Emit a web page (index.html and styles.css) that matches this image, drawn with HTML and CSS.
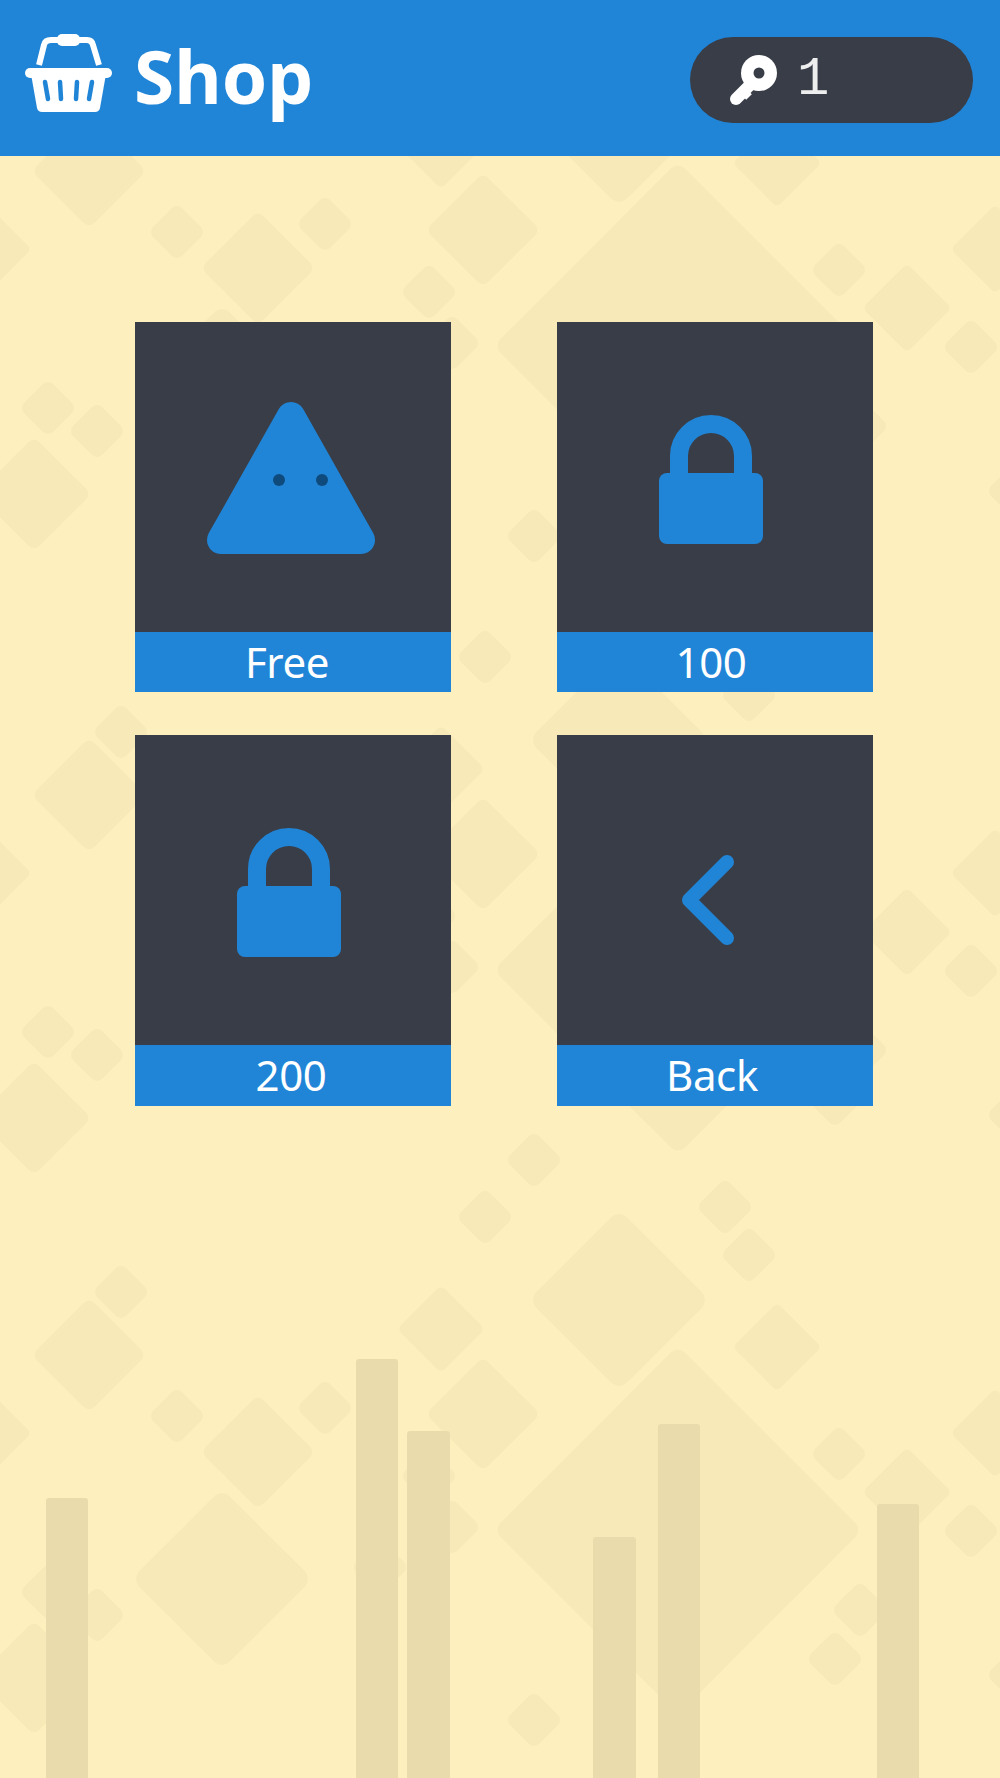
FILE: index.html
```html
<!DOCTYPE html>
<html lang="en">
<head>
    <meta charset="UTF-8">
    <meta name="viewport" content="width=device-width, initial-scale=1.0">
    <title>Shop</title>
    <link rel="stylesheet" href="styles.css">
</head>
<body>
    <div class="page">

        <!-- Fondo: rombos y barras -->
        <svg class="backdrop" width="1000" height="1778" viewBox="0 0 1000 1778" aria-hidden="true">
            <defs>
                <rect id="db" x="-50" y="-50" width="100" height="100" rx="4" transform="rotate(45)"/>
                <rect id="d" x="-50" y="-50" width="100" height="100" rx="9" transform="rotate(45)"/>
                <rect id="ds" x="-50" y="-50" width="100" height="100" rx="18" transform="rotate(45)"/>
                <g id="tile" class="diamonds">
                    <use href="#db" transform="translate(678 346) scale(2.61)"/>
                    <use href="#d" transform="translate(619 116) scale(1.28)"/>
                    <use href="#d" transform="translate(222 395) scale(1.28)"/>
                    <use href="#d" transform="translate(89 171) scale(.81)"/>
                    <use href="#d" transform="translate(258 268) scale(.81)"/>
                    <use href="#d" transform="translate(483 230) scale(.81)"/>
                    <use href="#d" transform="translate(34 494) scale(.81)"/>
                    <use href="#d" transform="translate(441 145) scale(.62)"/>
                    <use href="#d" transform="translate(777 163) scale(.63)"/>
                    <use href="#d" transform="translate(907 308) scale(.63)"/>
                    <use href="#d" transform="translate(995 249) scale(.63)"/>
                    <use href="#d" transform="translate(-13 249) scale(.63)"/>
                    <use href="#ds" transform="translate(121 108) scale(.41)"/>
                    <use href="#ds" transform="translate(177 232) scale(.41)"/>
                    <use href="#ds" transform="translate(325 224) scale(.41)"/>
                    <use href="#ds" transform="translate(534 536) scale(.41)"/>
                    <use href="#ds" transform="translate(485 33) scale(.41)"/>
                    <use href="#ds" transform="translate(725 23) scale(.41)"/>
                    <use href="#ds" transform="translate(749 71) scale(.41)"/>
                    <use href="#ds" transform="translate(839 270) scale(.41)"/>
                    <use href="#ds" transform="translate(971 347) scale(.41)"/>
                    <use href="#ds" transform="translate(860 426) scale(.41)"/>
                    <use href="#ds" transform="translate(835 475) scale(.41)"/>
                    <use href="#ds" transform="translate(452 343) scale(.41)"/>
                    <use href="#ds" transform="translate(429 292) scale(.41)"/>
                    <use href="#ds" transform="translate(380 383) scale(.41)"/>
                    <use href="#ds" transform="translate(97 431) scale(.41)"/>
                    <use href="#ds" transform="translate(48 408) scale(.41)"/>
                    <use href="#ds" transform="translate(1015 491) scale(.41)"/>
                </g>
            </defs>
            <use href="#tile"/>
            <use href="#tile" y="624"/>
            <use href="#tile" y="1184"/>
            <g class="bars">
                <rect x="46" y="1498" width="42" height="290" rx="3"/>
                <rect x="356" y="1359" width="42" height="430" rx="3"/>
                <rect x="407" y="1431" width="43" height="360" rx="3"/>
                <rect x="593" y="1537" width="43" height="250" rx="3"/>
                <rect x="658" y="1424" width="42" height="360" rx="3"/>
                <rect x="877" y="1504" width="42" height="280" rx="3"/>
            </g>
        </svg>

        <header class="topbar">
            <div class="title">
                <svg class="basket" width="88" height="80" viewBox="0 0 88 80" aria-hidden="true">
                    <path class="basket-handle" d="M14 31 L19 11 Q20 6 26 6 H62 Q67 6 68 11 L74 31"/>
                    <rect class="basket-fill" x="32" y="0" width="23" height="12" rx="5"/>
                    <rect class="basket-fill" x="0" y="34" width="87" height="10" rx="5"/>
                    <path class="basket-fill" d="M6 40 H81 L75 74 Q74 78 70 78 H17 Q13 78 12 74 Z"/>
                    <path class="basket-slots" d="M20 48 L23 65 M35 48 L36 65 M52 48 L51 65 M67 48 L64 65"/>
                </svg>
                <h1>Shop</h1>
            </div>
            <div class="keys">
                <svg class="key" width="52" height="52" viewBox="0 0 52 52" aria-hidden="true">
                    <path class="key-shaft" d="M24 28 L8 44"/>
                    <path class="key-tooth" d="M15 36 L21 42"/>
                    <circle class="key-ring" cx="31" cy="18" r="18"/>
                    <circle class="key-hole" cx="31" cy="18" r="5.5"/>
                </svg>
                <span class="key-count">1</span>
            </div>
        </header>

        <main class="grid">
            <div class="card">
                <div class="card-icon">
                    <svg width="200" height="200" viewBox="0 0 200 200" aria-hidden="true">
                        <polygon class="tri" points="98,39 168,163 28,163"/>
                        <circle class="eye" cx="86" cy="103" r="6"/>
                        <circle class="eye" cx="129" cy="103" r="6"/>
                    </svg>
                </div>
                <div class="card-label label-free">Free</div>
            </div>
            <div class="card">
                <div class="card-icon">
                    <svg width="200" height="200" viewBox="0 0 200 200" aria-hidden="true">
                        <path class="shackle" d="M64 100V79a32 32 0 0 1 64 0V100"/>
                        <rect class="lock-body" x="44" y="96" width="104" height="71" rx="8"/>
                    </svg>
                </div>
                <div class="card-label">100</div>
            </div>
            <div class="card">
                <div class="card-icon">
                    <svg width="200" height="200" viewBox="0 0 200 200" aria-hidden="true">
                        <path class="shackle" d="M64 100V79a32 32 0 0 1 64 0V100"/>
                        <rect class="lock-body" x="44" y="96" width="104" height="71" rx="8"/>
                    </svg>
                </div>
                <div class="card-label label-200">200</div>
            </div>
            <div class="card">
                <div class="card-icon">
                    <svg width="200" height="200" viewBox="0 0 200 200" aria-hidden="true">
                        <path class="chevron" d="M112 72 L74 110 L112 148"/>
                    </svg>
                </div>
                <div class="card-label label-back">Back</div>
            </div>
        </main>
    </div>
</body>
</html>
```

FILE: styles.css
```css
body {
    margin: 0;
    background-color: #feefbe;
    font-family: "Noto Sans", "Open Sans", sans-serif;
}

.page {
    position: relative;
    width: 1000px;
    height: 1778px;
    overflow: hidden;
}

.backdrop {
    position: absolute;
    left: 0;
    top: 0;
}

.diamonds {
    fill: #f8e9b9;
}

.bars {
    fill: #e9dbac;
}

.topbar {
    position: relative;
    display: flex;
    align-items: center;
    justify-content: space-between;
    height: 156px;
    padding: 0 27px 0 25px;
    background-color: #2185d7;
}

.title {
    display: flex;
    align-items: center;
    gap: 21px;
}

.basket {
    margin-top: -8px;
}

.basket-fill {
    fill: #ffffff;
}

.basket-handle {
    fill: none;
    stroke: #ffffff;
    stroke-width: 6;
}

.basket-slots {
    fill: none;
    stroke: #2185d7;
    stroke-width: 4.5;
    stroke-linecap: round;
}

h1 {
    margin: -5px 0 0;
    color: #ffffff;
    font-size: 73px;
    font-weight: 700;
    line-height: 80px;
}

.keys {
    display: flex;
    align-items: center;
    gap: 17px;
    width: 245px;
    height: 86px;
    margin-top: 4px;
    padding-left: 38px;
    border-radius: 43px;
    background-color: #383d47;
}

.key {
    margin-top: 1px;
}

.key-ring,
.key-shaft,
.key-tooth {
    fill: #ffffff;
    stroke: #ffffff;
}

.key-ring {
    stroke: none;
}

.key-shaft {
    stroke-width: 12;
    stroke-linecap: round;
}

.key-tooth {
    stroke-width: 8;
}

.key-hole {
    fill: #383d47;
}

.key-count {
    margin-top: 0;
    color: #eeeeee;
    font-family: "Liberation Mono", monospace;
    font-size: 54px;
    line-height: 60px;
}

.grid {
    position: relative;
    display: grid;
    grid-template-columns: 316px 316px;
    grid-template-rows: 370px 371px;
    column-gap: 106px;
    row-gap: 43px;
    padding: 166px 0 0 135px;
}

.card {
    display: flex;
    flex-direction: column;
    background-color: #383d47;
}

.card-icon {
    display: flex;
    flex: 0 0 310px;
    align-items: center;
    justify-content: center;
}

.card-label {
    flex: 1;
    padding-right: 8px;
    background-color: #2185d7;
    color: #ffffff;
    font-size: 42px;
    letter-spacing: -0.4px;
    line-height: 59px;
    text-align: center;
}

.label-free {
    padding-right: 12px;
}

.label-200 {
    padding-right: 4px;
}

.label-back {
    padding-right: 6px;
}

.tri {
    fill: #2185d7;
    stroke: #2185d7;
    stroke-width: 28;
    stroke-linejoin: round;
}

.eye {
    fill: #0f4a7c;
}

.lock-body {
    fill: #2185d7;
}

.shackle {
    fill: none;
    stroke: #2185d7;
    stroke-width: 18;
}

.chevron {
    fill: none;
    stroke: #2185d7;
    stroke-width: 14;
    stroke-linecap: round;
    stroke-linejoin: round;
}
```
